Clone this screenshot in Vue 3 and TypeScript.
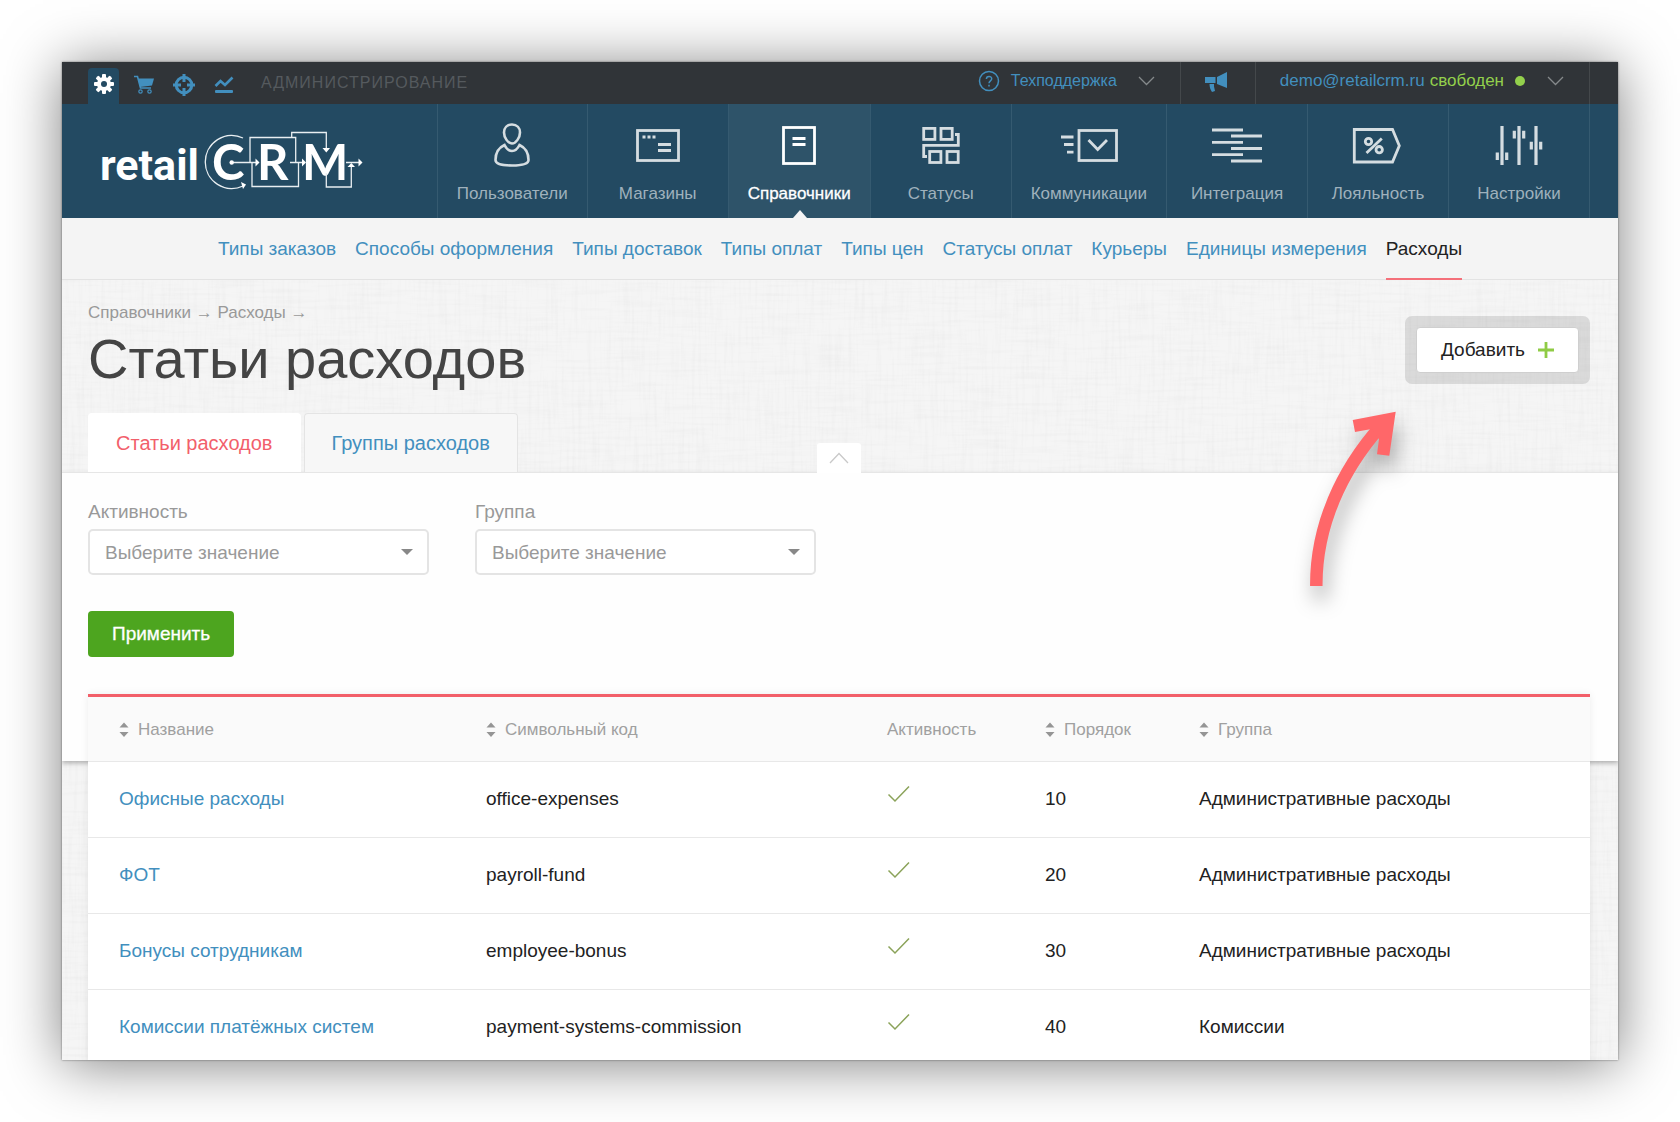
<script setup lang="ts">
import { ref } from 'vue'

interface NavItem {
  id: string
  label: string
}

interface Expense {
  name: string
  code: string
  order: number
  group: string
}

const navItems: NavItem[] = [
  { id: 'users', label: 'Пользователи' },
  { id: 'shops', label: 'Магазины' },
  { id: 'refs', label: 'Справочники' },
  { id: 'statuses', label: 'Статусы' },
  { id: 'comms', label: 'Коммуникации' },
  { id: 'integration', label: 'Интеграция' },
  { id: 'loyalty', label: 'Лояльность' },
  { id: 'settings', label: 'Настройки' },
]
const activeNav = ref('refs')

const subItems: string[] = [
  'Типы заказов',
  'Способы оформления',
  'Типы доставок',
  'Типы оплат',
  'Типы цен',
  'Статусы оплат',
  'Курьеры',
  'Единицы измерения',
  'Расходы',
]
const activeSub = ref('Расходы')

const tabs: string[] = ['Статьи расходов', 'Группы расходов']
const activeTab = ref(tabs[0])

const activity = ref('')
const group = ref('')

const columns = [
  { label: 'Название', sortable: true, cls: 'col-name' },
  { label: 'Символьный код', sortable: true, cls: 'col-code' },
  { label: 'Активность', sortable: false, cls: 'col-active' },
  { label: 'Порядок', sortable: true, cls: 'col-order' },
  { label: 'Группа', sortable: true, cls: 'col-group' },
]

const rows: Expense[] = [
  { name: 'Офисные расходы', code: 'office-expenses', order: 10, group: 'Административные расходы' },
  { name: 'ФОТ', code: 'payroll-fund', order: 20, group: 'Административные расходы' },
  { name: 'Бонусы сотрудникам', code: 'employee-bonus', order: 30, group: 'Административные расходы' },
  { name: 'Комиссии платёжных систем', code: 'payment-systems-commission', order: 40, group: 'Комиссии' },
]
</script>

<template>
  <div class="page">
    <div class="window">
      <header class="topbar">
        <div class="modes">
          <button class="mode active" type="button" aria-label="Администрирование">
            <svg width="20" height="20" viewBox="0 0 20 20">
              <g fill="#fff">
                <rect v-for="a in [0, 45, 90, 135]" :key="a" x="8" y="0" width="4" height="20" rx="1" :transform="`rotate(${a} 10 10)`" />
                <circle cx="10" cy="10" r="7" />
              </g>
              <circle cx="10" cy="10" r="3" fill="#234a62" />
            </svg>
          </button>
          <button class="mode" type="button" aria-label="Продажи">
            <svg width="20" height="20" viewBox="0 0 20 20">
              <path d="M0 1.500H3.500L6.500 13H17" fill="none" stroke="#428fbe" stroke-width="1.600" />
              <path d="M4 3.500H20L18 10.500L6 12Z" fill="#428fbe" />
              <circle cx="6.500" cy="16.500" r="1.700" fill="none" stroke="#428fbe" stroke-width="1.200" />
              <circle cx="15.500" cy="16.500" r="1.700" fill="none" stroke="#428fbe" stroke-width="1.200" />
            </svg>
          </button>
          <button class="mode" type="button" aria-label="Маркетинг">
            <svg width="22" height="22" viewBox="0 0 22 22">
              <circle cx="11" cy="11" r="7.800" fill="none" stroke="#428fbe" stroke-width="3" />
              <path d="M11 0V8M11 14V22M0 11H8M14 11H22" stroke="#428fbe" stroke-width="3" />
            </svg>
          </button>
          <button class="mode" type="button" aria-label="Аналитика">
            <svg width="20" height="18" viewBox="0 0 20 18">
              <path d="M1.500 10L6.500 5L11 9L18.500 1.500" fill="none" stroke="#428fbe" stroke-width="2.600" />
              <rect x="1" y="14" width="18" height="3" rx="1" fill="#428fbe" />
            </svg>
          </button>
        </div>
        <span class="mode-title">АДМИНИСТРИРОВАНИЕ</span>
        <div class="top-right">
          <button class="top-item support" type="button">
            <svg width="22" height="22" viewBox="0 0 22 22">
              <circle cx="11" cy="11" r="9.500" fill="none" stroke="#428fbe" stroke-width="1.500" />
              <path d="M8.400 9C8.400 5.600 13.700 5.600 13.700 8.800C13.700 10.800 11 10.900 11 13.300M11 14.800V16.600" fill="none" stroke="#428fbe" stroke-width="1.500" />
            </svg>
            <span class="support-label">Техподдержка</span>
            <svg width="17" height="10" viewBox="0 0 17 10"><path d="M1 1L8.500 8.500L16 1" fill="none" stroke="#85898b" stroke-width="1.300" /></svg>
          </button>
          <button class="top-item news" type="button" aria-label="Новости">
            <svg width="24" height="22" viewBox="0 0 24 22" fill="#428fbe">
              <path d="M23 1V17L13 13V6Z" />
              <path d="M1 6H11.500V12H1Z" />
              <path d="M5.500 13H10V15.500L11 20L8 21C6.500 19 5.500 16 5.500 13Z" />
            </svg>
          </button>
          <button class="top-item account" type="button">
            <span>demo@retailcrm.ru</span>
            <span class="free">свободен</span>
            <i class="dot"></i>
            <svg width="17" height="10" viewBox="0 0 17 10"><path d="M1 1L8.500 8.500L16 1" fill="none" stroke="#85898b" stroke-width="1.300" /></svg>
          </button>
        </div>
      </header>

      <nav class="main-nav">
        <a class="logo" href="#" aria-label="retailCRM">
          <svg width="264" height="62" viewBox="0 0 264 62">
            <g fill="#fff" font-weight="700">
              <text x="0" y="50" font-family="Roboto, 'Liberation Sans', sans-serif" font-size="43">retail</text>
              <g font-family="Lato, sans-serif" font-size="49">
                <text x="112" y="50">C</text>
                <text x="157" y="50">R</text>
                <text x="202" y="50">M</text>
              </g>
            </g>
            <g fill="none" stroke="#e8eef1" stroke-width="1.300">
              <path d="M143 8A26.500 26.500 0 1 0 143 56" />
              <path d="M131.700 32.500H157M150 32.500V7.500H195.700V32.500M190 32.500H203" />
              <path d="M152 32.500V56.500H198.500V32.500" />
              <path d="M191.700 7.500V2.500H226.300V18M226.300 43V57H251.300V36M246 32.500H260" />
            </g>
            <g fill="#fff">
              <circle cx="131.700" cy="32.500" r="2.200" />
              <path d="M155.500 28.500L159.500 32.500L155.500 36.500ZM202 28.500L206 32.500L202 36.500ZM258.500 28.500L262.500 32.500L258.500 36.500Z" />
              <path d="M222.500 18H230L226.300 22.500ZM247.500 37H255L251.300 33Z" />
              <path d="M141 52L146 54.500L143 59Z" />
            </g>
          </svg>
        </a>
        <a
          v-for="item in navItems"
          :key="item.id"
          href="#"
          class="nav-item"
          :class="{ active: item.id === activeNav }"
          @click.prevent="activeNav = item.id"
        >
          <svg class="nav-icon" width="54" height="46" viewBox="0 0 54 46" fill="none" stroke="currentColor" stroke-width="2.800">
            <g v-if="item.id === 'users'" stroke-width="2.600">
              <path d="M27 2.500C32 2.500 35 6 35 10.500C35 15.500 31 21.500 27 21.500C23 21.500 19 15.500 19 10.500C19 6 22 2.500 27 2.500Z" />
              <path d="M19.500 23C13 26 10.500 31 10.500 38C10.500 42 18 43.500 27 43.500C36 43.500 43.500 42 43.500 38C43.500 31 41 26 34.500 23C32.500 27 30 29 27 29C24 29 21.500 27 19.500 23Z" />
            </g>
            <g v-else-if="item.id === 'shops'">
              <rect x="6.500" y="8.500" width="41" height="30" />
              <path d="M11.500 15H14.500M16.500 15H19.500M21.500 15H24.500M27 22.500H40M27 28.500H40" />
            </g>
            <g v-else-if="item.id === 'refs'">
              <rect x="11.500" y="5.500" width="31" height="36" />
              <path d="M20.500 16.500H33.500M20.500 22.500H33.500" />
            </g>
            <g v-else-if="item.id === 'statuses'">
              <rect x="9.700" y="6.400" width="11.200" height="11" />
              <rect x="27" y="6.400" width="11.200" height="11" />
              <rect x="15.700" y="29.500" width="11.200" height="11" />
              <rect x="33" y="29.500" width="11.200" height="11" />
              <path d="M41 12.500H44.300V23.400H9.700V34.500H13" />
            </g>
            <g v-else-if="item.id === 'comms'">
              <rect x="17" y="8.500" width="37.500" height="30" />
              <path d="M-1 15H11.500M2 22.500H11.500M5 30.200H11.500M26.500 18L35.700 27.500L45 18" />
            </g>
            <g v-else-if="item.id === 'integration'">
              <path d="M2 8H33M21 14H52M2 20.300H33M21 26.500H52M2 32.700H33M21 39H52" />
            </g>
            <g v-else-if="item.id === 'loyalty'">
              <path d="M3.300 7.500H41.500L48.300 23.700L41.500 40H3.300Z" />
              <circle cx="17.500" cy="19.500" r="3.200" />
              <circle cx="28.200" cy="27.700" r="3.200" />
              <path d="M30.800 16.500L15.500 31" />
            </g>
            <g v-else stroke-width="3.200">
              <path d="M10 4V43M27 4V43M44 4V43M5.300 30.500V38M14.700 30.500V38M22.300 8.700V16.500M31.700 8.700V16.500M39.300 19.700V27.500M48.700 19.700V27.500" />
            </g>
          </svg>
          <span>{{ item.label }}</span>
        </a>
        <span class="nav-end"></span>
      </nav>

      <nav class="sub-nav">
        <a
          v-for="s in subItems"
          :key="s"
          href="#"
          :class="{ active: s === activeSub }"
          @click.prevent="activeSub = s"
        >{{ s }}</a>
      </nav>

      <main class="content">
        <svg class="linen" aria-hidden="true">
          <filter id="linen-h" x="0" y="0" width="100%" height="100%">
            <feTurbulence type="fractalNoise" baseFrequency="0.02 0.3" numOctaves="2" seed="4" />
            <feColorMatrix values="0 0 0 0 0  0 0 0 0 0  0 0 0 0 0  0.5 0 0 0 -0.2" />
          </filter>
          <filter id="linen-v" x="0" y="0" width="100%" height="100%">
            <feTurbulence type="fractalNoise" baseFrequency="0.3 0.02" numOctaves="2" seed="9" />
            <feColorMatrix values="0 0 0 0 0  0 0 0 0 0  0 0 0 0 0  0.5 0 0 0 -0.2" />
          </filter>
          <rect width="100%" height="100%" filter="url(#linen-h)" opacity="0.08" />
          <rect width="100%" height="100%" filter="url(#linen-v)" opacity="0.08" />
        </svg>

        <section class="heading">
          <div class="heading-row">
            <div>
              <div class="crumbs"><a href="#">Справочники</a> → <a href="#">Расходы</a> →</div>
              <h1>Статьи расходов</h1>
            </div>
            <div class="add-frame">
              <button class="add" type="button">
                Добавить
                <svg width="16" height="16" viewBox="0 0 16 16"><path d="M8 0V16M0 8H16" stroke="#8fcb45" stroke-width="2.800" /></svg>
              </button>
            </div>
          </div>
          <div class="tabs">
            <button
              v-for="t in tabs"
              :key="t"
              type="button"
              class="tab"
              :class="{ active: t === activeTab }"
              @click="activeTab = t"
            >{{ t }}</button>
          </div>
          <button class="collapse" type="button" aria-label="Свернуть фильтр">
            <svg width="20" height="12" viewBox="0 0 20 12"><path d="M1 11L10 1.500L19 11" fill="none" stroke="#c9c9c9" stroke-width="1.300" /></svg>
          </button>
          <svg class="pointer" width="120" height="200" viewBox="0 0 120 200" fill="#ff6769">
            <path d="M16.300 181C16 120 42 65 80 22" fill="none" stroke="#ff6769" stroke-width="12.500" />
            <path d="M52.700 15L95.700 6.700L89.300 50.700L77 49.300L79 34L71.700 24L55 27Z" />
          </svg>
        </section>

        <form class="filter" @submit.prevent>
          <div class="fields">
            <div class="field">
              <label for="f-activity">Активность</label>
              <div class="select">
                <select id="f-activity" v-model="activity"><option value="">Выберите значение</option></select>
              </div>
            </div>
            <div class="field">
              <label for="f-group">Группа</label>
              <div class="select">
                <select id="f-group" v-model="group"><option value="">Выберите значение</option></select>
              </div>
            </div>
          </div>
          <button class="apply" type="submit">Применить</button>
        </form>

        <div class="table-box">
          <table>
            <thead>
              <tr>
                <th v-for="c in columns" :key="c.label" :class="c.cls" scope="col">
                  <span class="head">
                    <svg v-if="c.sortable" width="10" height="16" viewBox="0 0 10 16" fill="#959595">
                      <path d="M5 0.500L9.500 5.500H0.500ZM0.500 10H9.500L5 15Z" />
                    </svg>
                    {{ c.label }}
                  </span>
                </th>
              </tr>
            </thead>
            <tbody>
              <tr v-for="r in rows" :key="r.code">
                <td><a href="#">{{ r.name }}</a></td>
                <td>{{ r.code }}</td>
                <td class="check">
                  <svg width="24" height="18" viewBox="0 0 24 18"><path d="M1.500 9.500L8 16L22 1.500" fill="none" stroke="#8ba35a" stroke-width="1.500" /></svg>
                </td>
                <td>{{ r.order }}</td>
                <td>{{ r.group }}</td>
              </tr>
            </tbody>
          </table>
        </div>
      </main>
    </div>
  </div>
</template>

<style>
body {
  margin: 0;
  background: #fff;
}
</style>

<style scoped>
.page {
  box-sizing: border-box;
  height: 100vh;
  padding: 62px;
  font-family: 'Liberation Sans', Arial, sans-serif;
  font-size: 19px;
  line-height: 20px;
  color: #222;
}
.page *,
.page *::before,
.page *::after {
  box-sizing: border-box;
}
a {
  color: #428fbe;
  text-decoration: none;
}
button {
  margin: 0;
  padding: 0;
  border: 0;
  background: none;
  font: inherit;
  color: inherit;
  cursor: pointer;
}
svg {
  flex: none;
}
.window {
  display: flex;
  flex-direction: column;
  height: 100%;
  overflow: hidden;
  background: #f5f5f5;
  box-shadow: 0 4px 54px rgba(0, 0, 0, 0.5), 0 0 2px rgba(0, 0, 0, 0.5);
}

.topbar {
  display: flex;
  flex: none;
  align-items: stretch;
  height: 42px;
  background: #303438;
}
.modes {
  display: flex;
  align-items: flex-end;
  gap: 9px;
  padding-left: 26px;
}
.mode {
  display: flex;
  align-items: center;
  justify-content: center;
  width: 31px;
  height: 36px;
  padding-bottom: 3px;
  border-radius: 4px 4px 0 0;
}
.mode.active {
  padding-bottom: 5px;
  background: #234a62;
}
.mode-title {
  padding-left: 22px;
  font-size: 16px;
  line-height: 42px;
  letter-spacing: 1px;
  color: #555a5e;
}
.top-right {
  display: flex;
  margin-left: auto;
  padding-right: 28px;
}
.top-item {
  display: flex;
  align-items: center;
  padding-bottom: 5px;
  border-right: 1px solid #44484b;
  font-size: 17px;
  color: #428fbe;
}
.support {
  font-size: 16px;
  padding-right: 25px;
}
.support-label {
  padding: 0 21px 0 11px;
}
.news {
  justify-content: center;
  width: 75px;
  padding-bottom: 2px;
  padding-right: 4px;
}
.account {
  padding-left: 24px;
  padding-right: 25px;
}
.free {
  padding-left: 5px;
  color: #93d04c;
}
.dot {
  width: 10px;
  height: 10px;
  margin: 0 22px 0 11px;
  border-radius: 50%;
  background: #93d04c;
}

.main-nav {
  display: flex;
  flex: none;
  height: 114px;
  background: #234a62;
}
.logo {
  flex: 1;
  padding: 26px 0 0 38px;
}
.nav-item {
  position: relative;
  display: flex;
  flex-direction: column;
  align-items: center;
  min-width: 141px;
  padding: 18px 19px 0;
  border-left: 1px solid #355a70;
  font-size: 17px;
  color: #9fb1bc;
}
.nav-icon {
  overflow: visible;
  margin-bottom: 16px;
  color: #d5dde1;
}
.nav-item.active {
  background: #2e5369;
  color: #fff;
  -webkit-text-stroke: 0.3px #fff;
}
.nav-item.active .nav-icon {
  color: #fff;
}
.nav-item.active::after {
  content: '';
  position: absolute;
  bottom: 0;
  left: 50%;
  margin-left: -6px;
  border: 7px solid transparent;
  border-top: 0;
  border-bottom: 8px solid #f4f4f4;
}
.nav-end {
  width: 29px;
  border-left: 1px solid #355a70;
}

.sub-nav {
  display: flex;
  flex: none;
  justify-content: center;
  gap: 19px;
  height: 62px;
  border-bottom: 1px solid #e3e3e3;
  background: #f4f4f4;
  line-height: 62px;
}
.sub-nav a {
  height: 62px;
}
.sub-nav a.active {
  border-bottom: 2px solid #f4707a;
  color: #222;
}

.content {
  position: relative;
  flex: none;
}
.linen {
  position: absolute;
  inset: 0;
  width: 100%;
  height: 100%;
}
.heading {
  position: relative;
  z-index: 2;
  padding: 23px 28px 0 26px;
  border-bottom: 1px solid #e6e6e6;
}
.heading-row {
  display: flex;
  justify-content: space-between;
  height: 110px;
}
.crumbs,
.crumbs a {
  font-size: 17px;
  color: #999;
}
h1 {
  margin: 4px 0 0;
  font-size: 56px;
  line-height: 64px;
  font-weight: 400;
  color: #444;
}
.add-frame {
  align-self: flex-start;
  margin-top: 13px;
  padding: 11px;
  border-radius: 7px;
  background: rgba(0, 0, 0, 0.11);
}
.add {
  display: flex;
  align-items: center;
  gap: 13px;
  height: 46px;
  padding: 0 24px;
  border: 1px solid #cfcfcf;
  border-radius: 4px;
  background: #fff;
  color: #222;
}
.tabs {
  display: flex;
  gap: 3px;
}
.tab {
  height: 59px;
  padding: 0 27px;
  border: 1px solid #e4e4e4;
  border-bottom: 0;
  border-radius: 4px 4px 0 0;
  background: #f7f7f7;
  font-size: 20px;
  color: #428fbe;
}
.tab.active {
  border-color: #fff;
  background: #fff;
  color: #f25f6b;
}
.collapse {
  position: absolute;
  bottom: -1px;
  left: 50%;
  display: flex;
  align-items: center;
  justify-content: center;
  width: 44px;
  height: 30px;
  margin-left: -23px;
  border-radius: 3px 3px 0 0;
  background: #fff;
}
.pointer {
  position: absolute;
  top: 125px;
  right: 198px;
  overflow: visible;
  filter: drop-shadow(4px 14px 10px rgba(0, 0, 0, 0.3));
}

.filter {
  position: relative;
  padding: 29px 26px 104px;
  background: #fefefe;
  box-shadow: 0 2px 5px rgba(0, 0, 0, 0.3);
}
.fields {
  display: flex;
  gap: 46px;
}
.field {
  width: 341px;
}
.field label {
  display: block;
  margin-bottom: 7px;
  color: #999;
}
.select {
  position: relative;
}
.select::after {
  content: '';
  position: absolute;
  top: 20px;
  right: 16px;
  border: 6px solid transparent;
  border-bottom: 0;
  border-top-color: #888;
  pointer-events: none;
}
select {
  display: block;
  width: 100%;
  height: 46px;
  padding: 2px 15px 0;
  border: 2px solid #e4e4e4;
  border-radius: 5px;
  appearance: none;
  background: #fff;
  font: inherit;
  color: #999;
}
.apply {
  height: 46px;
  margin-top: 36px;
  padding: 0 24px;
  border-radius: 4px;
  background: #4da51f;
  color: #fff;
  -webkit-text-stroke: 0.3px #fff;
}

.table-box {
  position: relative;
  margin: -67px 28px 0 26px;
  border-top: 3px solid #f25f69;
  background: #fff;
  box-shadow: 0 0 8px rgba(0, 0, 0, 0.07);
}
table {
  width: 100%;
  border-collapse: collapse;
  table-layout: fixed;
}
th,
td {
  padding: 0 0 0 31px;
  border-bottom: 1px solid #e8e8e8;
  text-align: left;
  font-weight: 400;
  white-space: nowrap;
}
th {
  height: 64px;
  padding-top: 2px;
  background: #fafafa;
  font-size: 17px;
  color: #a0a0a0;
}
td {
  height: 76px;
}
.head {
  display: flex;
  align-items: center;
  gap: 9px;
}
.col-name {
  width: 367px;
}
.col-code {
  width: 401px;
}
.col-active {
  width: 158px;
}
.col-order {
  width: 154px;
}
.check svg {
  display: block;
  margin-bottom: 10px;
}
</style>
